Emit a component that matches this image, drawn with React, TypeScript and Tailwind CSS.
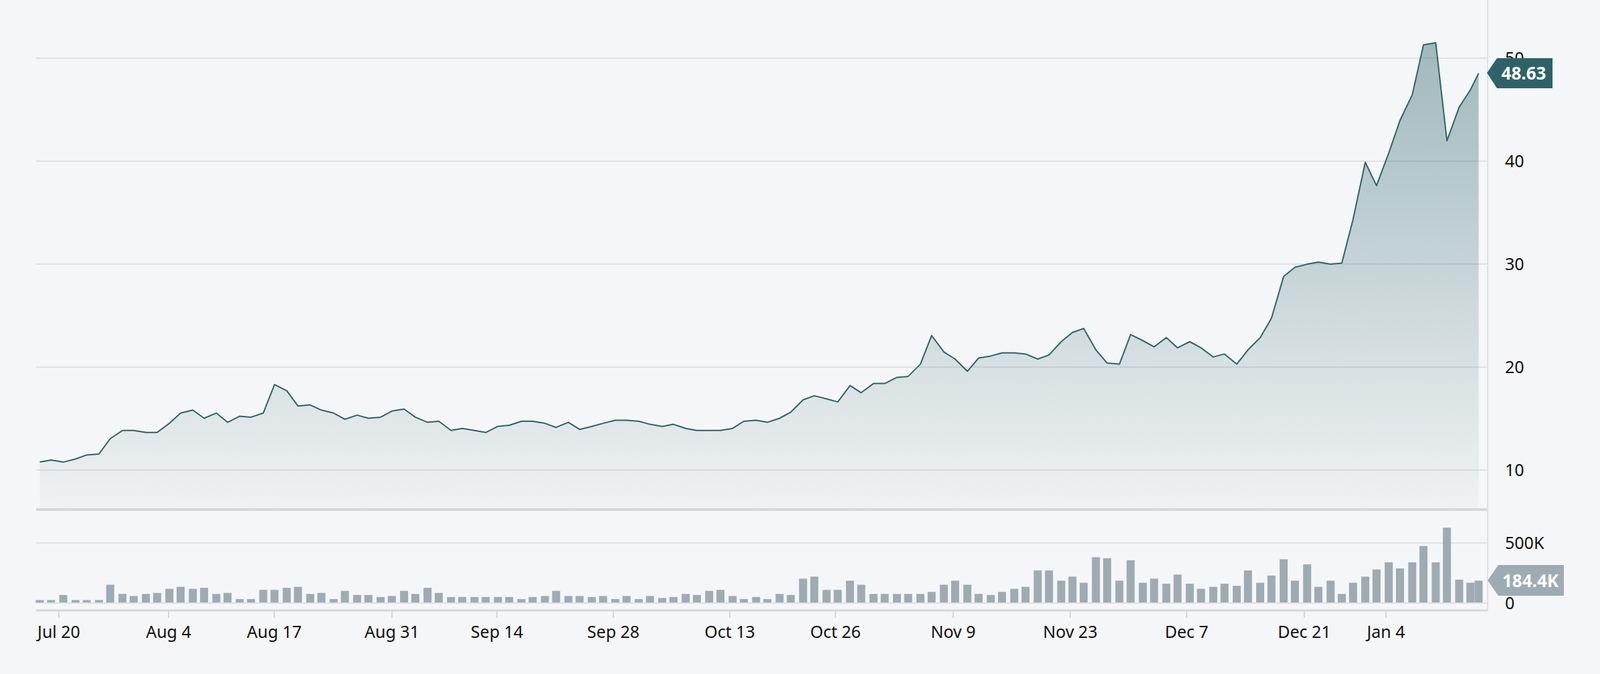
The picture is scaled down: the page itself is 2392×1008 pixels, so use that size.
import React from 'react';

const S = 2392 / 1568;

// price line traced in display coords (x, y)
const pts: [number, number][] = [
  [39,453],[50,451],[62,453],[74,450],[85,446],[97,445],[108,430],[120,422],[131,422],[143,424],[154,424],[166,415],[177,405],[189,402],[200,410],[212,405],[223,414],[235,408],[246,409],[258,405],[269,377],[281,383],[292,398],[304,397],[315,402],[327,405],[338,411],[350,407],[361,410],[373,409],[384,403],[396,401],[407,409],[419,414],[430,413],[442,422],[453,420],[465,422],[476,424],[488,418],[499,417],[511,413],[522,413],[534,415],[545,419],[557,414],[568,421],[580,418],[591,415],[603,412],[614,412],[626,413],[637,416],[649,418],[660,416],[672,420],[683,422],[695,422],[706,422],[718,420],[729,413],[741,412],[752,414],[764,410],[775,404],[787,392],[798,388],[810,391],[821,394],[833,378],[844,385],[856,376],[867,376],[879,370],[890,369],[902,357],[913,329],[925,345],[936,352],[948,364],[959,351],[971,349],[982,346],[994,346],[1005,347],[1017,352],[1028,348],[1040,335],[1051,326],[1062,322],[1074,343],[1085,356],[1097,357],[1108,328],[1120,334],[1131,340],[1143,331],[1154,341],[1166,335],[1177,341],[1189,350],[1200,347],[1212,357],[1223,343],[1235,331],[1246,312],[1258,271],[1269,262],[1281,259],[1292,257],[1304,259],[1315,258],[1326,215],[1338,159],[1349,182],[1361,150],[1372,118],[1384,93],[1395,44],[1407,42],[1418,138],[1430,105],[1441,88],[1449,72],
];

const vols = [3,3,8,3,3,3,18,9,7,9,10,14,16,14,15,9,10,4,4,13,13,15,16,9,10,4,12,8,8,6,7,12,9,15,10,6,6,6,6,6,6,4,6,7,12,7,7,6,7,4,7,4,7,5,6,9,8,12,13,7,4,6,4,9,8,24,26,13,13,22,18,9,9,9,9,9,11,18,22,18,9,8,11,14,16,32,32,22,26,20,45,44,22,42,20,24,19,28,19,14,16,19,17,32,20,27,43,22,38,16,22,9,20,26,33,40,34,40,56,40,74,23,20,22];

const ticks: [string, number][] = [
  ['Jul 20', 88], ['Aug 4', 252], ['Aug 17', 410], ['Aug 31', 586], ['Sep 14', 743], ['Sep 28', 917],
  ['Oct 13', 1091], ['Oct 26', 1249], ['Nov 9', 1425], ['Nov 23', 1600], ['Dec 7', 1774], ['Dec 21', 1950], ['Jan 4', 2072],
];

const priceGrid: [string, number][] = [['50', 87], ['40', 241], ['30', 395], ['20', 549], ['10', 703]];

export default function App() {
  const p = pts.map(([x, y]) => [x * S, y * S] as [number, number]);
  const line = p.map(([x, y], i) => `${i ? 'L' : 'M'}${x.toFixed(1)},${y.toFixed(1)}`).join(' ');
  const area = `${line} L${p[p.length - 1][0].toFixed(1)},760 L${p[0][0].toFixed(1)},760 Z`;
  const n = Math.min(p.length, vols.length);
  const vStart = p.length - n;

  return (
    <div className="w-[2392px] h-[1008px] bg-[#f5f6f8] flex font-['Roboto','Liberation_Sans',sans-serif]">
      <svg width="2392" height="1008" viewBox="0 0 2392 1008">
        <defs>
          <linearGradient id="ar" x1="0" y1="0" x2="0" y2="1">
            <stop offset="0" stopColor="#2d6367" stopOpacity="0.42" />
            <stop offset="1" stopColor="#2d6367" stopOpacity="0.03" />
          </linearGradient>
        </defs>
        {priceGrid.map(([t, y]) => (
          <g key={t}>
            <line x1="54" x2="2224" y1={y} y2={y} stroke="#dfe1e5" strokeWidth="2" />
            <text x="2250" y={y + 9} fontSize="25" fill="#111">{t}</text>
          </g>
        ))}
        <path d={area} fill="url(#ar)" />
        <path d={line} fill="none" stroke="#2d6367" strokeWidth="2" strokeLinejoin="round" />
        <line x1="54" x2="2224" y1="762" y2="762" stroke="#d6d7d9" strokeWidth="4" />
        <line x1="2224" x2="2224" y1="0" y2="913" stroke="#dfe1e5" strokeWidth="2" />
        <line x1="54" x2="2224" y1="812" y2="812" stroke="#dfe1e5" strokeWidth="2" />
        <text x="2250" y="821" fontSize="25" fill="#111">500K</text>
        <text x="2250" y="911" fontSize="25" fill="#111">0</text>
        {Array.from({ length: n }).map((_, i) => {
          const h = vols[i] * S;
          const x = p[vStart + i][0];
          return <rect key={i} x={x - 6} y={902 - h} width="12" height={h} fill="#9eabb3" />;
        })}
        <line x1="54" x2="2224" y1="902" y2="902" stroke="#dfe1e5" strokeWidth="2" />
        <line x1="54" x2="2224" y1="913" y2="913" stroke="#d6d7d9" strokeWidth="3" />
        {ticks.map(([t, x]) => (
          <g key={t}>
            <line x1={x} x2={x} y1="913" y2="924" stroke="#d6d7d9" strokeWidth="2" />
            <text x={x} y="954" fontSize="25" fill="#111" textAnchor="middle">{t}</text>
          </g>
        ))}
        <path d="M2223,109 L2238,87 L2321,87 L2321,132 L2238,132 Z" fill="#2d6367" />
        <text x="2278" y="119" fontSize="26" fontWeight="700" fill="#fff" textAnchor="middle">48.63</text>
        <path d="M2224,868 L2240,845 L2338,845 L2338,891 L2240,891 Z" fill="#9eabb3" />
        <text x="2288" y="878" fontSize="26" fontWeight="700" fill="#fff" textAnchor="middle">184.4K</text>
      </svg>
    </div>
  );
}
